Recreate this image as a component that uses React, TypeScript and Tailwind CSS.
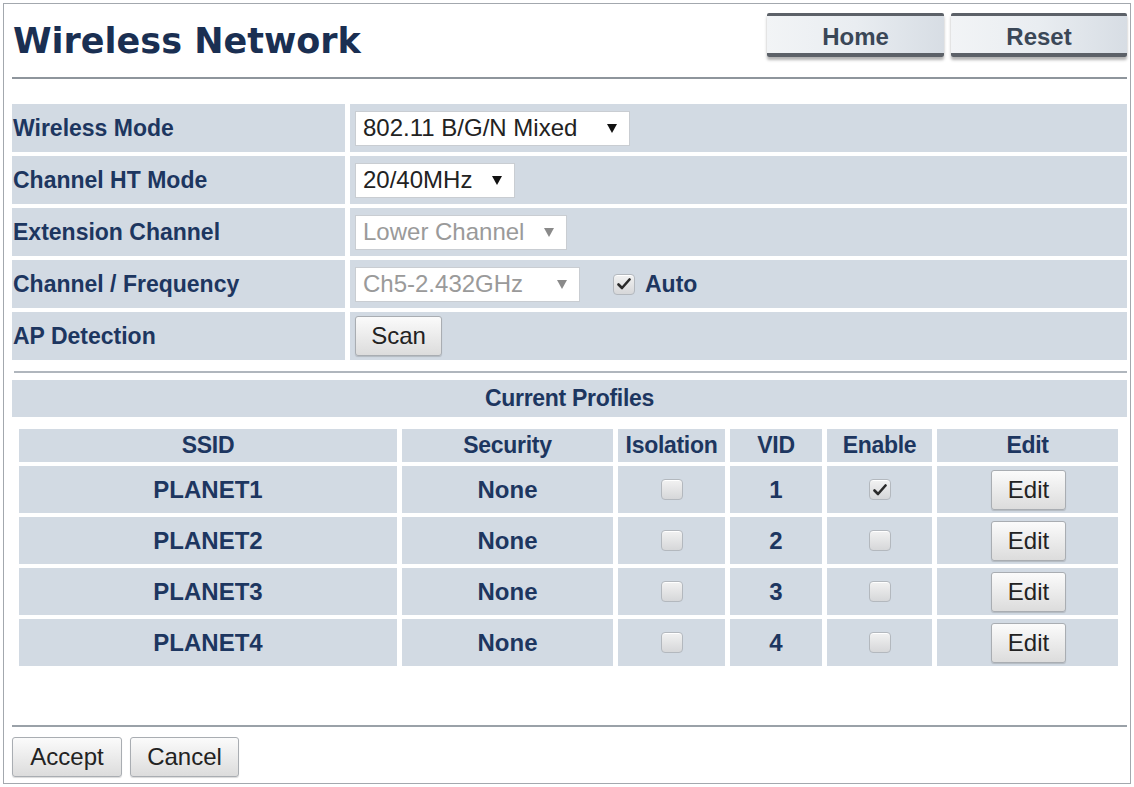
import React from "react";

const Arrow = ({ gray }: { gray?: boolean }) => (
  <svg width="10" height="9" viewBox="0 0 10 9" className="shrink-0">
    <path d="M0 0 L10 0 L5 9 Z" fill={gray ? "#8a8a8a" : "#111"} />
  </svg>
);

const Check = ({ checked }: { checked?: boolean }) => (
  <div className="w-[22px] h-[21px] rounded-[4px] border border-[#b3b8be] bg-linear-to-b from-[#f2f2f2] to-[#d6d7d9] flex items-center justify-center shadow-[inset_0_1px_0_#fff]">
    {checked && (
      <svg width="14" height="12" viewBox="0 0 14 12">
        <path d="M1.5 6.5 L5 10 L12.5 1.5" stroke="#2a2a2a" strokeWidth="2.6" fill="none" strokeLinecap="round" strokeLinejoin="round" />
      </svg>
    )}
  </div>
);

const Select = ({ text, w, gray }: { text: string; w: string; gray?: boolean }) => (
  <div className={`${w} h-[35px] bg-white border border-[#c9cdd2] flex items-center justify-between pl-[7px] pr-[12px] text-[24px] ${gray ? "text-[#9a9a9a]" : "text-[#222]"}`}>
    <span className="leading-none">{text}</span>
    <Arrow gray={gray} />
  </div>
);

const Btn = ({ children, w, h = "h-[40px]" }: { children: React.ReactNode; w: string; h?: string }) => (
  <div className={`${w} ${h} rounded-[3px] border border-[#a9adb2] bg-linear-to-b from-[#fbfbfb] to-[#dcdcdc] flex items-center justify-center text-[24px] text-[#222] shadow-[0_1px_1px_rgba(0,0,0,0.15)]`}>
    {children}
  </div>
);

const TopBtn = ({ label, w }: { label: string; w: string }) => (
  <div className={`${w} h-[44px] rounded-[2px] border-t-[3px] border-b-[4px] border-[#5c6168] bg-linear-to-r from-[#f2f4f6] via-[#e9edf1] to-[#d7dde4] shadow-[0_3px_3px_rgba(0,0,0,0.3)] flex items-center justify-center pt-[5px] text-[24px] font-bold text-[#3a4757]`}>
    {label}
  </div>
);

const labelCls = "bg-[#d2dae3] h-[48px] flex items-center pl-[1px] text-[23px] font-bold text-[#1d3660]";
const valCls = "bg-[#d2dae3] h-[48px] flex items-center pl-[5px]";

const profiles = [
  { ssid: "PLANET1", vid: "1", en: true },
  { ssid: "PLANET2", vid: "2", en: false },
  { ssid: "PLANET3", vid: "3", en: false },
  { ssid: "PLANET4", vid: "4", en: false },
];

export default function App() {
  const cell = "bg-[#d2dae3] flex items-center justify-center";
  const hd = `${cell} h-[33px] text-[23px] font-bold text-[#1d3660] tracking-[-0.3px]`;
  const td = `${cell} h-[47px] text-[24px] font-bold text-[#1d3660]`;
  return (
    <div className="w-[1134px] h-[787px] bg-white p-[3px] font-['Liberation_Sans',Arial,sans-serif]">
      <div className="h-[781px] border border-[#a3a8ae] pl-[8px] pr-[3px] flex flex-col">
        {/* header */}
        <div className="flex justify-between items-start h-[73px] border-b-2 border-[#8e959c] box-content">
          <div className="mt-[17px] pl-[1px] font-['DejaVu_Sans',Verdana,sans-serif] font-bold text-[35px] leading-[40px] text-[#1a2f52]">
            Wireless Network
          </div>
          <div className="mt-[9px] flex gap-[7px]">
            <TopBtn label="Home" w="w-[177px]" />
            <TopBtn label="Reset" w="w-[176px]" />
          </div>
        </div>

        {/* form */}
        <div className="mt-[25px] grid grid-cols-[333px_1fr] gap-x-[5px] gap-y-[4px]">
          <div className={labelCls}>Wireless Mode</div>
          <div className={valCls}><Select text="802.11 B/G/N Mixed" w="w-[275px]" /></div>
          <div className={labelCls}>Channel HT Mode</div>
          <div className={valCls}><Select text="20/40MHz" w="w-[160px]" /></div>
          <div className={labelCls}>Extension Channel</div>
          <div className={valCls}><Select text="Lower Channel" w="w-[212px]" gray /></div>
          <div className={labelCls}>Channel / Frequency</div>
          <div className={valCls}>
            <Select text="Ch5-2.432GHz" w="w-[225px]" gray />
            <div className="ml-[33px]"><Check checked /></div>
            <span className="ml-[10px] text-[23px] font-bold text-[#1d3660]">Auto</span>
          </div>
          <div className={labelCls}>AP Detection</div>
          <div className={valCls}><Btn w="w-[87px]">Scan</Btn></div>
        </div>

        <div className="mt-[11px] ml-[2px] h-[2px] bg-[#b0b6bd]" />

        <div className="mt-[7px] h-[37px] bg-[#d2dae3] flex items-center justify-center text-[23px] font-bold text-[#1d3660] tracking-[-0.3px]">
          Current Profiles
        </div>

        {/* table */}
        <div className="mt-[12px] ml-[7px] grid grid-cols-[378px_211px_107px_92px_105px_181px] gap-x-[5px] gap-y-[4px]">
          <div className={hd}>SSID</div>
          <div className={hd}>Security</div>
          <div className={hd}>Isolation</div>
          <div className={hd}>VID</div>
          <div className={hd}>Enable</div>
          <div className={hd}>Edit</div>
          {profiles.map((p) => (
            <React.Fragment key={p.ssid}>
              <div className={td}>{p.ssid}</div>
              <div className={td}>None</div>
              <div className={td}><Check /></div>
              <div className={td}>{p.vid}</div>
              <div className={td}><Check checked={p.en} /></div>
              <div className={td}>
                <div className="pl-[2px]">
                  <Btn w="w-[75px]" h="h-[40px]"><span className="font-normal text-[#222]">Edit</span></Btn>
                </div>
              </div>
            </React.Fragment>
          ))}
        </div>

        <div className="mt-[59px] h-[2px] bg-[#9aa1a8]" />

        <div className="mt-[10px] flex gap-[8px]">
          <Btn w="w-[110px]">Accept</Btn>
          <Btn w="w-[109px]">Cancel</Btn>
        </div>
      </div>
    </div>
  );
}
